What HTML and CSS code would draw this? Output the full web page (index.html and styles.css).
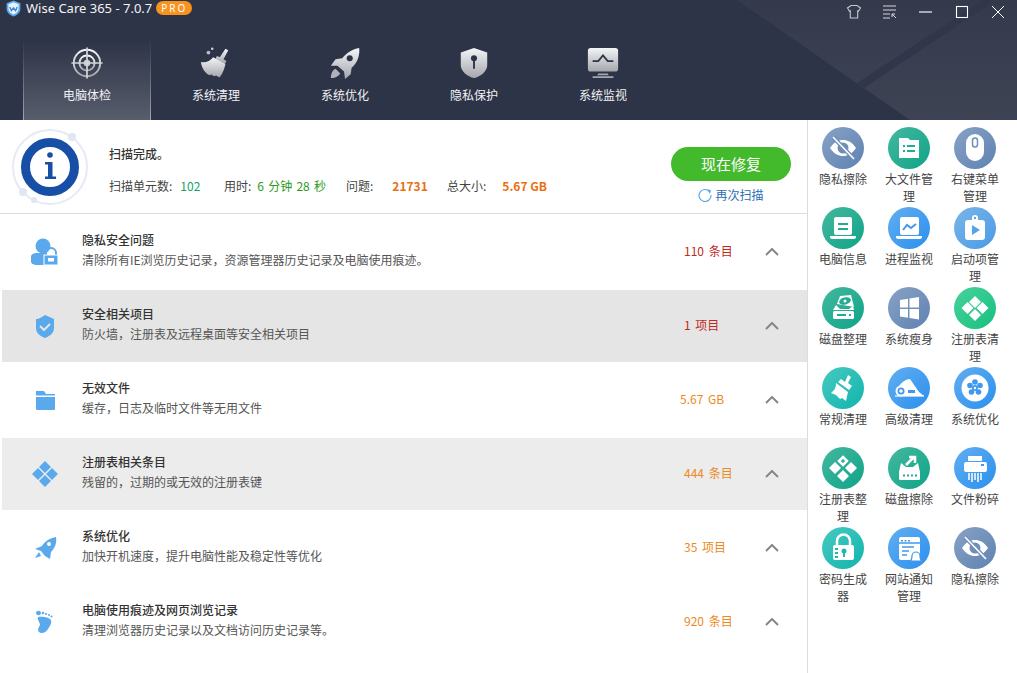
FILE: index.html
```html
<!DOCTYPE html>
<html lang="zh-CN">
<head>
<meta charset="utf-8">
<title>Wise Care 365</title>
<link rel="stylesheet" href="styles.css">
</head>
<body>
<div class="app">
<svg class="defs" width="0" height="0" aria-hidden="true">
  <defs>
    <linearGradient id="chrome" x1="0" y1="0" x2="0" y2="1"><stop offset="0" stop-color="#f4f5f7"/><stop offset="1" stop-color="#a4a6ad"/></linearGradient>
    <linearGradient id="lit" x1="0" y1="0" x2="0" y2="1"><stop offset="0" stop-color="#343a4c"/><stop offset="1" stop-color="#3e4354"/></linearGradient>
  </defs>
</svg>
<header class="header">
  <svg class="decor" viewBox="0 0 1017 120" aria-hidden="true">
    <polygon points="737,0 1017,0 1017,120 910,120" fill="url(#lit)"/>
    <polygon points="857,83 983,0 990,0 990,4 864,88" fill="#31364a"/>
  </svg>
  <div class="titlebar">
    <svg class="logo" viewBox="0 0 16 16" aria-hidden="true"><path d="M8 .5 14.500 3v5.500c0 3.400-3 5.800-6.500 7-3.500-1.200-6.500-3.600-6.500-7V3z" fill="#5aa9ec"/><path d="M8 2.200 12.800 4v4.300c0 2.500-2.200 4.300-4.800 5.400-2.600-1.100-4.800-2.900-4.800-5.400V4z" fill="#e9f3fc"/><path d="M4.500 6.500 6 10l2-2.500L10 10l1.500-3.500" fill="none" stroke="#3a87d6" stroke-width="1.300"/></svg>
    <span class="apptitle">Wise Care 365 - 7.0.7</span>
    <span class="pro">PRO</span>
    <div class="winctl">
      <svg viewBox="0 0 16 16" aria-hidden="true"><path d="M5 1.500h6l3.500 2.500-2 3.200-.8-.4v7.200H4.300V6.800l-.8.4-2-3.200z" fill="none" stroke="#c5c7cd" stroke-width="1.100"/></svg>
      <svg viewBox="0 0 16 16" aria-hidden="true"><path d="M1 2h13M1 6h13M1 10h7M1 14h7" stroke="#d5d6da" stroke-width="1.100"/><path d="M10 10h3M10 10v3M10 10l4 4" stroke="#d5d6da" stroke-width="1" fill="none"/></svg>
      <svg viewBox="0 0 16 16" aria-hidden="true"><path d="M1 8h13" stroke="#b5b7bd" stroke-width="1.800"/></svg>
      <svg viewBox="0 0 16 16" aria-hidden="true"><rect x="2.500" y="2.500" width="11" height="11" fill="none" stroke="#fff" stroke-width="1.100"/></svg>
      <svg viewBox="0 0 16 16" aria-hidden="true"><path d="M2 2l12 12M14 2 2 14" stroke="#fff" stroke-width="1"/></svg>
    </div>
  </div>
  <nav class="tabs">
    <div class="tab active">
      <svg class="tabicon" viewBox="0 0 36 36" aria-hidden="true"><g fill="none" stroke="url(#chrome)" stroke-width="2"><circle cx="18" cy="18" r="14"/><circle cx="18" cy="18" r="8"/></g><circle cx="18" cy="18" r="3.500" fill="#c9cbd0"/><path d="M18 1.500v33M1.500 18h33" stroke="#d4d5d9" stroke-width="1.800"/></svg>
      <span class="tablabel">电脑体检</span>
    </div>
    <div class="tab">
      <svg class="tabicon" viewBox="0 0 36 36" aria-hidden="true"><path d="M28 3l3 1.500-5 9.500 3 2-1.500 3-10-5.500 1.500-3 3 1.500z" fill="url(#chrome)"/><path d="M15 12l13 7c-1 5-3 10-6 14-2 0-3-1-4-2l-1 1c-2 0-3-1-4-2l-1 1C7 30 3 24 2 17c5 1 10-1 13-5z" fill="url(#chrome)"/><circle cx="10" cy="7" r="2" fill="#b9bbc2"/><circle cx="14" cy="3" r="1.300" fill="#d7d8dc"/></svg>
      <span class="tablabel">系统清理</span>
    </div>
    <div class="tab">
      <svg class="tabicon" viewBox="0 0 36 36" aria-hidden="true"><path d="M33 2c1 8-2 16-8 21l-1 7-6 5-1-8-7-6-7 0 5-7 7-1C20 7 26 3 33 2z" fill="url(#chrome)"/><circle cx="23" cy="13" r="3.200" fill="#2e3447"/><path d="M8 24c-3 1-5 5-5 10 4 0 8-2 10-5z" fill="#b0b2b9"/></svg>
      <span class="tablabel">系统优化</span>
    </div>
    <div class="tab">
      <svg class="tabicon" viewBox="0 0 36 36" aria-hidden="true"><path d="M18 2l14 5v13c0 7-7 12-14 14C11 32 4 27 4 20V7z" fill="url(#chrome)"/><circle cx="18" cy="13" r="3.200" fill="#2e3447"/><path d="M18 14v10" stroke="#2e3447" stroke-width="2"/></svg>
      <span class="tablabel">隐私保护</span>
    </div>
    <div class="tab">
      <svg class="tabicon" viewBox="0 0 36 36" aria-hidden="true"><rect x="2" y="2" width="32" height="25" rx="3" fill="url(#chrome)"/><path d="M7 16h6l5-6 5 6h6" fill="none" stroke="#2e3447" stroke-width="1.800"/><path d="M13 29h10l1 2H12zM7 32h22v2H7z" fill="#a6a8af"/></svg>
      <span class="tablabel">系统监视</span>
    </div>
  </nav>
</header>
<div class="body">
  <main class="main">
    <section class="summary">
      <svg class="scanicon" viewBox="0 0 80 80" aria-hidden="true"><circle cx="40" cy="40" r="37" fill="none" stroke="#e5eaf5" stroke-width="2"/><circle cx="62" cy="10" r="4" fill="#e1e6f3"/><circle cx="13" cy="65" r="4" fill="#e1e6f3"/><circle cx="24" cy="73" r="3" fill="#e1e6f3"/><circle cx="40" cy="40" r="24.500" fill="#fff" stroke="#174ea6" stroke-width="9"/><circle cx="40" cy="28" r="2.800" fill="#174ea6"/><path d="M35 35h7.500v14.500H46V52H35v-2.500h3V37.500h-3z" fill="#174ea6"/></svg>
      <div class="scaninfo">
        <div class="done">扫描完成。</div>
        <div class="stats">
          <span class="s1">扫描单元数:<b class="teal">102</b></span>
          <span class="s2">用时:<b class="lime">6 分钟 28 秒</b></span>
          <span class="s3">问题:<b class="hot">21731</b></span>
          <span>总大小:<b class="hot last">5.67 GB</b></span>
        </div>
      </div>
      <div class="actions">
        <button class="fix" type="button">现在修复</button>
        <div class="rescan">
          <svg viewBox="0 0 14 14" aria-hidden="true"><path d="M11.500 3.500A6 6 0 1 0 13 7" fill="none" stroke="#5aa9ec" stroke-width="1.200"/><path d="M9 1.500l4 .5-1 4z" fill="#5aa9ec"/></svg>
          <span>再次扫描</span>
        </div>
      </div>
    </section>
    <section class="rows">
      <div class="row">
        <svg class="rowicon" viewBox="0 0 28 28" aria-hidden="true"><circle cx="12" cy="8" r="7.500" fill="#5aa9ec"/><path d="M5 15h10v12H5a6 6 0 0 1 0-12z" fill="#5aa9ec"/><path d="M15 18v-3a5 5 0 0 1 10 0v3" fill="none" stroke="#5aa9ec" stroke-width="2"/><rect x="13" y="17" width="14" height="10" fill="#5aa9ec" stroke="#fff" stroke-width="1"/><rect x="17" y="20" width="6" height="3.500" fill="#fff"/></svg>
        <div class="rowtext"><div class="rowtitle">隐私安全问题</div><div class="rowsub">清除所有IE浏览历史记录，资源管理器历史记录及电脑使用痕迹。</div></div>
        <div class="val red">110 条目</div>
        <svg class="chev" viewBox="0 0 14 8" aria-hidden="true"><path d="M1 7l6-6 6 6" fill="none" stroke="#868686" stroke-width="2"/></svg>
      </div>
      <div class="row shade1">
        <svg class="rowicon" viewBox="0 0 28 28" aria-hidden="true"><path d="M14 3l9 4v9c0 5-4 8-9 10-5-2-9-5-9-10V7c3 0 6-2 9-4z" fill="#5aa9ec"/><path d="M9 14l4 4 6-6" fill="none" stroke="#e5e5e5" stroke-width="2"/></svg>
        <div class="rowtext"><div class="rowtitle">安全相关项目</div><div class="rowsub">防火墙，注册表及远程桌面等安全相关项目</div></div>
        <div class="val red">1 项目</div>
        <svg class="chev" viewBox="0 0 14 8" aria-hidden="true"><path d="M1 7l6-6 6 6" fill="none" stroke="#868686" stroke-width="2"/></svg>
      </div>
      <div class="row">
        <svg class="rowicon" viewBox="0 0 28 28" aria-hidden="true"><path d="M5 5h8l2 3h9v1.500H5z" fill="#5aa9ec"/><path d="M5 11h19v12a1 1 0 0 1-1 1H6a1 1 0 0 1-1-1z" fill="#5aa9ec"/></svg>
        <div class="rowtext"><div class="rowtitle">无效文件</div><div class="rowsub">缓存，日志及临时文件等无用文件</div></div>
        <div class="val orange wide">5.67 GB</div>
        <svg class="chev" viewBox="0 0 14 8" aria-hidden="true"><path d="M1 7l6-6 6 6" fill="none" stroke="#868686" stroke-width="2"/></svg>
      </div>
      <div class="row shade2">
        <svg class="rowicon" viewBox="0 0 28 28" aria-hidden="true"><g fill="#5aa9ec"><path d="M14 1l6 6-6 6-6-6z"/><path d="M7 8l6 6-6 6-6-6z"/><path d="M21 8l6 6-6 6-6-6z"/><path d="M14 15l6 6-6 6-6-6z"/></g></svg>
        <div class="rowtext"><div class="rowtitle">注册表相关条目</div><div class="rowsub">残留的，过期的或无效的注册表键</div></div>
        <div class="val orange">444 条目</div>
        <svg class="chev" viewBox="0 0 14 8" aria-hidden="true"><path d="M1 7l6-6 6 6" fill="none" stroke="#868686" stroke-width="2"/></svg>
      </div>
      <div class="row">
        <svg class="rowicon" viewBox="0 0 28 28" aria-hidden="true"><path d="M25 3c1 6-1 11-5 15l-1 7-5-3-4-5-6-2 7-3C14 7 19 4 25 3z" fill="#5aa9ec"/><circle cx="18" cy="10" r="2" fill="#fff"/><path d="M8 18l2 4-6 2z" fill="#5aa9ec"/></svg>
        <div class="rowtext"><div class="rowtitle">系统优化</div><div class="rowsub">加快开机速度，提升电脑性能及稳定性等优化</div></div>
        <div class="val orange">35 项目</div>
        <svg class="chev" viewBox="0 0 14 8" aria-hidden="true"><path d="M1 7l6-6 6 6" fill="none" stroke="#868686" stroke-width="2"/></svg>
      </div>
      <div class="row">
        <svg class="rowicon" viewBox="0 0 28 28" aria-hidden="true"><g fill="#5aa9ec"><ellipse cx="7.500" cy="5" rx="2.500" ry="2.200"/><circle cx="12" cy="5" r="1.300"/><circle cx="15" cy="6" r="1.100"/><circle cx="18" cy="7" r="1"/><circle cx="20.500" cy="8.500" r="1"/><path d="M7 9c4-1 11 0 13 3 1 3-1 6-3 9-2 4-7 5-9 3-2-2 0-5 1-7 0-3-3-5-2-8z"/></g></svg>
        <div class="rowtext"><div class="rowtitle">电脑使用痕迹及网页浏览记录</div><div class="rowsub">清理浏览器历史记录以及文档访问历史记录等。</div></div>
        <div class="val orange">920 条目</div>
        <svg class="chev" viewBox="0 0 14 8" aria-hidden="true"><path d="M1 7l6-6 6 6" fill="none" stroke="#868686" stroke-width="2"/></svg>
      </div>
    </section>
  </main>
  <aside class="tools">
    <div class="tool"><div class="disc slate"><svg viewBox="0 0 42 42" aria-hidden="true"><path d="M8 21c4-6 8.500-8 13-8s9 2 13 8c-4 6-8.500 8-13 8s-9-2-13-8z" fill="#fff"/><circle cx="21" cy="21" r="5.500" fill="#6f8fb9"/><path d="M11 10l21 22" stroke="#6f8fb9" stroke-width="4"/><path d="M11 10l21 22" stroke="#fff" stroke-width="1.600"/></svg></div><div class="toolname">隐私擦除</div></div>
    <div class="tool"><div class="disc teal-bg"><svg viewBox="0 0 42 42" aria-hidden="true"><path d="M11 11h9l2 2h9v18H11z" fill="#fff"/><path d="M15 18h2v2h-2zM19 18h8v2h-8zM15 23h2v2h-2zM19 23h8v2h-8z" fill="#22ad93"/></svg></div><div class="toolname">大文件管理</div></div>
    <div class="tool"><div class="disc slate"><svg viewBox="0 0 42 42" aria-hidden="true"><rect x="12" y="7" width="18" height="27" rx="9" fill="#fff"/><rect x="18.500" y="11" width="5" height="9" rx="2.500" fill="none" stroke="#6f8fb9" stroke-width="1.500"/></svg></div><div class="toolname">右键菜单管理</div></div>
    <div class="tool"><div class="disc teal-bg"><svg viewBox="0 0 42 42" aria-hidden="true"><rect x="12" y="10" width="18" height="18" rx="2" fill="#fff"/><path d="M16 16h10v2H16zM16 21h10v2H16z" fill="#22ad93"/><path d="M8 29h26v1c0 1-1 2-2 2H10c-1 0-2-1-2-2z" fill="#fff"/></svg></div><div class="toolname">电脑信息</div></div>
    <div class="tool"><div class="disc blue"><svg viewBox="0 0 42 42" aria-hidden="true"><rect x="12" y="10" width="19" height="18" rx="2" fill="#fff"/><path d="M15 23l4-5 4 3 5-4" fill="none" stroke="#4099ee" stroke-width="2"/><path d="M8 29h26v1c0 1-1 2-2 2H10c-1 0-2-1-2-2z" fill="#fff"/></svg></div><div class="toolname">进程监视</div></div>
    <div class="tool"><div class="disc sky"><svg viewBox="0 0 42 42" aria-hidden="true"><path d="M14 13h4v-2a3 3 0 0 1 6 0v2h4a3 3 0 0 1 3 3v14a3 3 0 0 1-3 3H14a3 3 0 0 1-3-3V16a3 3 0 0 1 3-3z" fill="#fff"/><path d="M18 18l8 5-8 5z" fill="#58a3e8"/><circle cx="21" cy="11" r="1.200" fill="#58a3e8"/></svg></div><div class="toolname">启动项管理</div></div>
    <div class="tool"><div class="disc teal-bg"><svg viewBox="0 0 42 42" aria-hidden="true"><path d="M15 17l3-8 11-1 3 12z" fill="#fff"/><ellipse cx="23" cy="14" rx="6" ry="3.500" fill="#22ad93" transform="rotate(-15 23 14)"/><circle cx="23" cy="14" r="1.500" fill="#fff"/><path d="M11 23l3-5 4 4h9l4-3 1 4z" fill="#fff"/><rect x="11" y="24" width="21" height="8" rx="1.500" fill="#fff"/><path d="M15 27h9v2h-9zM27 27h2v2h-2z" fill="#22ad93"/></svg></div><div class="toolname">磁盘整理</div></div>
    <div class="tool"><div class="disc slate"><svg viewBox="0 0 42 42" aria-hidden="true"><path d="M12 13l8-1.200v8.700h-8zM21.500 11.600 31 10v10.500h-9.500zM12 22h8v8.700L12 29.500zM21.500 22H31v10.500l-9.500-1.400z" fill="#fff"/></svg></div><div class="toolname">系统瘦身</div></div>
    <div class="tool"><div class="disc emerald"><svg viewBox="0 0 42 42" aria-hidden="true"><g fill="#fff"><path d="M21 9l6 6-6 6-6-6z"/><path d="M13.500 15l6 6-6 6-6-6z"/><path d="M28.500 15l6 6-6 6-6-6z"/><path d="M21 22l6 6-6 6-6-6z"/></g></svg></div><div class="toolname">注册表清理</div></div>
    <div class="tool"><div class="disc cyan"><svg viewBox="0 0 42 42" aria-hidden="true"><path d="M26 8l3 2-3 6 4 3-3 4-11-8 3-3 4 3zM14 16l12 9-2 9-4-3-2 1-4-4-5-2 2-2c2-1 3-5 3-8z" fill="#fff"/></svg></div><div class="toolname">常规清理</div></div>
    <div class="tool"><div class="disc blue"><svg viewBox="0 0 42 42" aria-hidden="true"><path d="M11 19c3-4 7-7 11-7l9 13 5 4H12z" fill="#fff"/><circle cx="13" cy="24" r="5.500" fill="#fff"/><circle cx="13" cy="24" r="3.500" fill="#4099ee"/><circle cx="13" cy="24" r="1.800" fill="#fff"/><path d="M20 23h7v3h-7z" fill="#4099ee"/><path d="M7 29h29" stroke="#fff" stroke-width="1.200"/></svg></div><div class="toolname">高级清理</div></div>
    <div class="tool"><div class="disc blue"><svg viewBox="0 0 42 42" aria-hidden="true"><circle cx="21" cy="21" r="13.500" fill="#fff"/><g fill="#4099ee"><circle cx="21" cy="15" r="2.800"/><circle cx="26" cy="18.500" r="2.800"/><circle cx="24.500" cy="25" r="2.800"/><circle cx="17.500" cy="25" r="2.800"/><circle cx="16" cy="18.500" r="2.800"/><circle cx="21" cy="21" r="3"/></g><circle cx="21" cy="21" r="1.200" fill="#fff"/></svg></div><div class="toolname">系统优化</div></div>
    <div class="tool"><div class="disc teal-bg"><svg viewBox="0 0 42 42" aria-hidden="true"><path d="M21 10l4 4-4 4-4-4z" fill="none" stroke="#fff" stroke-width="2.500"/><g fill="#fff"><path d="M13 15l6 6-6 6-6-6z"/><path d="M29 15l6 6-6 6-6-6z"/><path d="M21 23l6 6-6 6-6-6z"/></g></svg></div><div class="toolname">注册表整理</div></div>
    <div class="tool"><div class="disc teal-bg"><svg viewBox="0 0 42 42" aria-hidden="true"><path d="M13 16l5 4h7l5-4 2 9H11z" fill="#fff"/><path d="M18 18l8-8M21 10h6v6" fill="none" stroke="#fff" stroke-width="2.500"/><rect x="11" y="24" width="21" height="9" rx="1.500" fill="#fff"/><path d="M15 27.500h2v2h-2zM19 27.500h2v2h-2zM23 27.500h2v2h-2zM27 27.500h2v2h-2z" fill="#22ad93"/></svg></div><div class="toolname">磁盘擦除</div></div>
    <div class="tool"><div class="disc blue"><svg viewBox="0 0 42 42" aria-hidden="true"><path d="M14 9h14v5H14z" fill="#fff"/><path d="M12 15h19a2 2 0 0 1 2 2v6a2 2 0 0 1-2 2H12a2 2 0 0 1-2-2v-6a2 2 0 0 1 2-2z" fill="#fff"/><path d="M15 26v7M18 26v9M21 26v7M24 26v9M27 26v7" stroke="#fff" stroke-width="1.500"/><rect x="27" y="17" width="3" height="2" fill="#4099ee"/></svg></div><div class="toolname">文件粉碎</div></div>
    <div class="tool"><div class="disc cyan"><svg viewBox="0 0 42 42" aria-hidden="true"><path d="M15 18v-4a6.500 6.500 0 0 1 13 0v4" fill="none" stroke="#fff" stroke-width="2.500"/><rect x="11" y="18" width="21" height="15" rx="2" fill="#fff"/><circle cx="22" cy="24" r="2.500" fill="#1fb9b0"/><path d="M21 25h2v5h-2zM13 21h3v2h-3zM13 25h3v2h-3zM13 29h3v2h-3z" fill="#1fb9b0"/></svg></div><div class="toolname">密码生成器</div></div>
    <div class="tool"><div class="disc blue"><svg viewBox="0 0 42 42" aria-hidden="true"><rect x="11" y="10" width="21" height="23" rx="2" fill="#fff"/><path d="M13 13h2v1.500h-2zM16.500 13h2v1.500h-2zM20 13h2v1.500h-2z" fill="#4099ee"/><path d="M11 16h21M14 20h12M14 24h7M14 28h5" stroke="#4099ee" stroke-width="1.300"/><path d="M22 34c2-1 2-3 2-5a4 4 0 0 1 8 0c0 2 0 4 2 5z" fill="#fff" stroke="#4099ee" stroke-width="1.200"/></svg></div><div class="toolname">网站通知管理</div></div>
    <div class="tool"><div class="disc slate"><svg viewBox="0 0 42 42" aria-hidden="true"><path d="M8 21c4-6 8.500-8 13-8s9 2 13 8c-4 6-8.500 8-13 8s-9-2-13-8z" fill="#fff"/><circle cx="21" cy="21" r="5.500" fill="#6f8fb9"/><path d="M11 10l21 22" stroke="#6f8fb9" stroke-width="4"/><path d="M11 10l21 22" stroke="#fff" stroke-width="1.600"/></svg></div><div class="toolname">隐私擦除</div></div>
  </aside>
</div>
</div>
</body>
</html>
```

FILE: styles.css
```css
* { box-sizing: border-box; }
html, body { margin: 0; padding: 0; background: #fff; overflow: hidden; }
body { font-family: "Noto Sans CJK SC", "Noto Sans", sans-serif; font-size: 12px; color: #333; }
.app { width: 1017px; height: 673px; display: flex; flex-direction: column; }
.defs { position: absolute; }

.header { position: relative; height: 120px; flex: none; background: #2e3447; color: #fff; }
.decor { position: absolute; inset: 0; width: 100%; height: 100%; }
.titlebar { position: relative; height: 40px; display: flex; align-items: flex-start; padding: 0 0 0 5px; }
.logo { width: 17px; height: 17px; flex: none; }
.apptitle { font-family: "Noto Sans", sans-serif; font-size: 13px; line-height: 16px; margin-left: 4px; color: #f2f3f5; }
.pro { margin-left: 4px; width: 36px; height: 14px; margin-top: 1px; border-radius: 7px; background: #f7931e; color: #fff; font: 10px/14px "Noto Sans", sans-serif; letter-spacing: 2px; text-align: center; }
.winctl { margin-left: auto; display: flex; gap: 20px; padding: 4px 11px 0 0; }
.winctl svg { width: 16px; height: 16px; }

.tabs { position: relative; display: flex; gap: 1px; padding-left: 23px; height: 80px; }
.tab { width: 128px; display: flex; flex-direction: column; align-items: center; padding-top: 6px; }
.tab.active { background: linear-gradient(#2e3447, #585d6c); border-left: 1px solid; border-right: 1px solid; border-image: linear-gradient(#2e3447, #a4a7b0) 1; }
.tabicon { width: 34px; height: 34px; flex: none; }
.tablabel { margin-top: 7px; line-height: 16px; font-size: 12px; color: #f1f2f4; }

.body { flex: 1; display: flex; min-height: 0; }
.main { width: 807px; flex: none; display: flex; flex-direction: column; }

.summary { height: 94px; flex: none; display: flex; align-items: flex-start; padding: 7px 16px 0 10px; border-bottom: 1px solid #dcdcdc; }
.scanicon { width: 80px; height: 80px; flex: none; }
.scaninfo { margin-left: 19px; flex: 1; padding-top: 18px; }
.done { line-height: 18px; font-weight: 500; color: #333; }
.stats { margin-top: 14px; line-height: 18px; display: flex; color: #444; }
.stats b { font-weight: 400; margin-left: 8px; }
.s1 { width: 115px; }
.s2 { width: 122px; }
.s3 { width: 101px; }
.teal { color: #17a06a; }
.stats .lime { color: #2d9a1e; margin-left: 6px; word-spacing: 1.500px; }
.stats .hot { color: #e8700f; font-weight: 700; margin-left: 19px; }
.stats .hot.last { margin-left: 16px; }
.actions { width: 120px; flex: none; display: flex; flex-direction: column; align-items: center; padding-top: 20px; }
.fix { width: 120px; height: 34px; border: 0; border-radius: 17px; background: #43b92c; color: #fff; font: 15px/34px "Noto Sans CJK SC", sans-serif; padding: 0; }
.rescan { margin-top: 5px; display: flex; align-items: center; gap: 3px; line-height: 18px; color: #2a6db5; }
.rescan svg { width: 14px; height: 14px; }

.rows { display: flex; flex-direction: column; gap: 2px; padding: 2px 0 0 2px; }
.row { height: 72px; display: flex; align-items: center; }
.shade1 { background: #e5e5e5; }
.shade2 { background: #ececec; }
.rowicon { width: 28px; height: 28px; flex: none; margin: 0 23px 0 29px; }
.rowtext { flex: 1; min-width: 0; padding-bottom: 4px; }
.rowtitle { line-height: 18px; font-weight: 500; color: #333; }
.rowsub { margin-top: 2px; line-height: 18px; color: #555; }
.val { width: 49px; white-space: nowrap; margin-right: 32px; line-height: 18px; padding-bottom: 2px; word-spacing: 2px; }
.val.wide { text-indent: -4px; }
.red { color: #c02a1c; }
.orange { color: #ec8a1e; }
.chev { width: 14px; height: 8px; flex: none; margin-right: 28px; }

.tools { flex: 1; border-left: 1px solid #dcdcdc; padding: 7px 0 0 2px; display: grid; grid-template-columns: repeat(3, 66px); grid-auto-rows: 80px; align-content: start; }
.tool { display: flex; flex-direction: column; align-items: center; }
.disc { width: 42px; height: 42px; border-radius: 50%; flex: none; }
.disc svg { display: block; width: 42px; height: 42px; }
.slate { background: linear-gradient(135deg, #88a2c6, #5f82b1); }
.teal-bg { background: linear-gradient(135deg, #44b8a0, #0fa487); }
.blue { background: linear-gradient(135deg, #62aef0, #2a90ee); }
.sky { background: linear-gradient(135deg, #7ab6e8, #4a9ae6); }
.emerald { background: linear-gradient(135deg, #48d29c, #16c07f); }
.cyan { background: linear-gradient(135deg, #48c9c1, #10b5ad); }
.toolname { width: 50px; margin-top: 1px; text-align: center; line-height: 17px; color: #444; word-break: break-all; }
```
